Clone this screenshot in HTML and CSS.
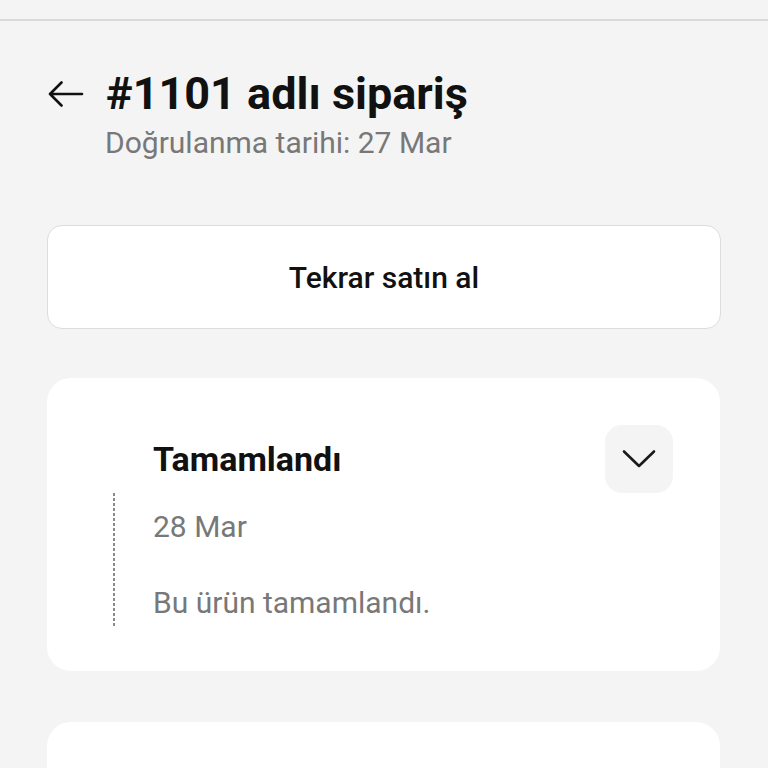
FILE: index.html
```html
<!DOCTYPE html>
<html lang="tr">
<head>
<meta charset="utf-8">
<title>#1101 adlı sipariş</title>
<link rel="stylesheet" href="styles.css">
</head>
<body>
<div class="topbar"></div>
<main class="page">
  <header class="header">
    <div class="title-row">
      <svg class="back" width="36" height="26" viewBox="0 0 36 26" aria-hidden="true">
        <path d="M2 13 H34 M13.5 1.5 L2 13 L13.5 24.5" fill="none" stroke="#111" stroke-width="2.6" stroke-linecap="round" stroke-linejoin="round"/>
      </svg>
      <h1 class="title">#1101 adlı sipariş</h1>
    </div>
    <p class="subtitle">Doğrulanma tarihi: 27 Mar</p>
  </header>

  <button class="rebuy">Tekrar satın al</button>

  <section class="card">
    <div class="card-head">
      <h2 class="status">Tamamlandı</h2>
      <div class="toggle">
        <svg width="34" height="20" viewBox="0 0 34 20" aria-hidden="true">
          <path d="M2 2.5 L17 17 L32 2.5" fill="none" stroke="#1a1a1a" stroke-width="2.6" stroke-linecap="round" stroke-linejoin="round"/>
        </svg>
      </div>
    </div>
    <div class="timeline">
      <p class="date">28 Mar</p>
      <p class="note">Bu ürün tamamlandı.</p>
    </div>
  </section>

  <section class="card card-next"></section>
</main>
</body>
</html>
```

FILE: styles.css
```css
* { box-sizing: border-box; }
html, body { margin: 0; padding: 0; }
body {
  background: #f4f4f4;
  font-family: Roboto, "Noto Sans", "Liberation Sans", sans-serif;
  color: #111;
  overflow: hidden;
}
.topbar {
  height: 21px;
  border-bottom: 2px solid #dadada;
}
.page {
  padding: 0 47px;
}
.header {
  margin-top: 47px;
}
.title-row {
  display: flex;
  align-items: center;
  gap: 22px;
  height: 52px;
}
.back { flex: none; margin-left: 1px; }
.title {
  margin: 0;
  font-size: 45px;
  line-height: 52px;
  font-weight: 700;
  color: #111;
}
.subtitle {
  margin: 5px 0 0 58px;
  font-size: 30px;
  line-height: 36px;
  color: #787878;
}
.rebuy {
  display: block;
  width: 100%;
  height: 104px;
  margin-top: 64px;
  background: #fff;
  border: 1.5px solid #dcdcdc;
  border-radius: 15px;
  font-family: Roboto, "Noto Sans", sans-serif;
  font-size: 30px;
  font-weight: 500;
  color: #111;
}
.card {
  margin: 49px 1px 0 0;
  background: #fff;
  border-radius: 24px;
  padding: 47px 47px 44px 66px;
}
.card-head {
  display: flex;
  align-items: center;
  justify-content: space-between;
  height: 68px;
}
.status {
  margin: 0 0 0 40px;
  font-size: 34px;
  font-weight: 700;
  line-height: 40px;
  color: #111;
}
.toggle {
  width: 68px;
  height: 68px;
  border-radius: 17px;
  background: #f4f4f4;
  display: flex;
  align-items: center;
  justify-content: center;
}
.timeline {
  height: 134px;
  padding: 16px 0 0 40px;
  background-image: repeating-linear-gradient(to bottom, #8a8a8a 0 3px, transparent 3px 5px);
  background-size: 2px 100%;
  background-repeat: no-repeat;
  background-position: 0 0;
}
.date, .note {
  margin: 0;
  font-size: 30px;
  line-height: 36px;
  color: #787878;
}
.note { margin-top: 40px; }
.card-next {
  margin-top: 51px;
  height: 200px;
  padding: 0;
}
```
